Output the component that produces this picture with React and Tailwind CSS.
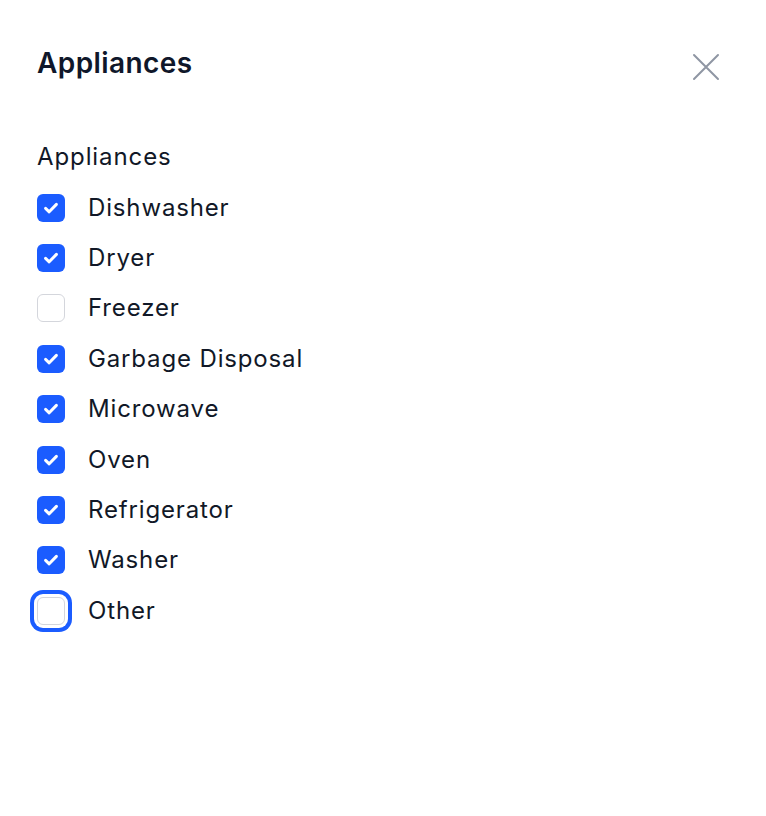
import React from "react";

const items = [
  ["Dishwasher", true],
  ["Dryer", true],
  ["Freezer", false],
  ["Garbage Disposal", true],
  ["Microwave", true],
  ["Oven", true],
  ["Refrigerator", true],
  ["Washer", true],
  ["Other", false, true],
];

function Box({ checked, focused }) {
  if (checked) {
    return (
      <span className="flex h-[28px] w-[28px] shrink-0 items-center justify-center rounded-[6px] bg-[#1b5cff]">
        <svg width="18" height="18" viewBox="0 0 18 18" fill="none">
          <path d="M3.6 9.4 L7.2 12.8 L14.4 5.4" stroke="white" strokeWidth="3" strokeLinecap="round" strokeLinejoin="round" />
        </svg>
      </span>
    );
  }
  return (
    <span
      className={
        "h-[28px] w-[28px] shrink-0 rounded-[6px] border border-[#d4d6dc] bg-white" +
        (focused ? " ring-4 ring-[#1b5cff] ring-offset-[3px] ring-offset-white" : "")
      }
    />
  );
}

export default function App() {
  return (
    <div className="min-h-[816px] w-[766px] bg-white text-[#111827]" style={{ fontFamily: "Inter, 'Noto Sans', sans-serif" }}>
      <div className="flex items-center justify-between pl-[37px] pr-[46px] pt-[45px]">
        <h1 className="text-[28px] font-semibold leading-[36px] tracking-[0.4px] text-[#0f172a]">Appliances</h1>
        <svg width="28" height="28" viewBox="0 0 28 28" fill="none" className="mt-[8px]">
          <path d="M2 2 L26 26 M26 2 L2 26" stroke="#8f96a3" strokeWidth="2" strokeLinecap="round" />
        </svg>
      </div>
      <div className="mt-[51px] pl-[37px]">
        <div className="flex h-[50.4px] items-center text-[24px] leading-[32px] tracking-[0.9px] text-[#111827]">Appliances</div>
        {items.map(([label, checked, focused]) => (
          <div key={label} className="flex h-[50.4px] items-center gap-[23px]">
            <Box checked={checked} focused={focused} />
            <span className="text-[24px] leading-[32px] tracking-[0.85px] text-[#111827]">{label}</span>
          </div>
        ))}
      </div>
    </div>
  );
}
